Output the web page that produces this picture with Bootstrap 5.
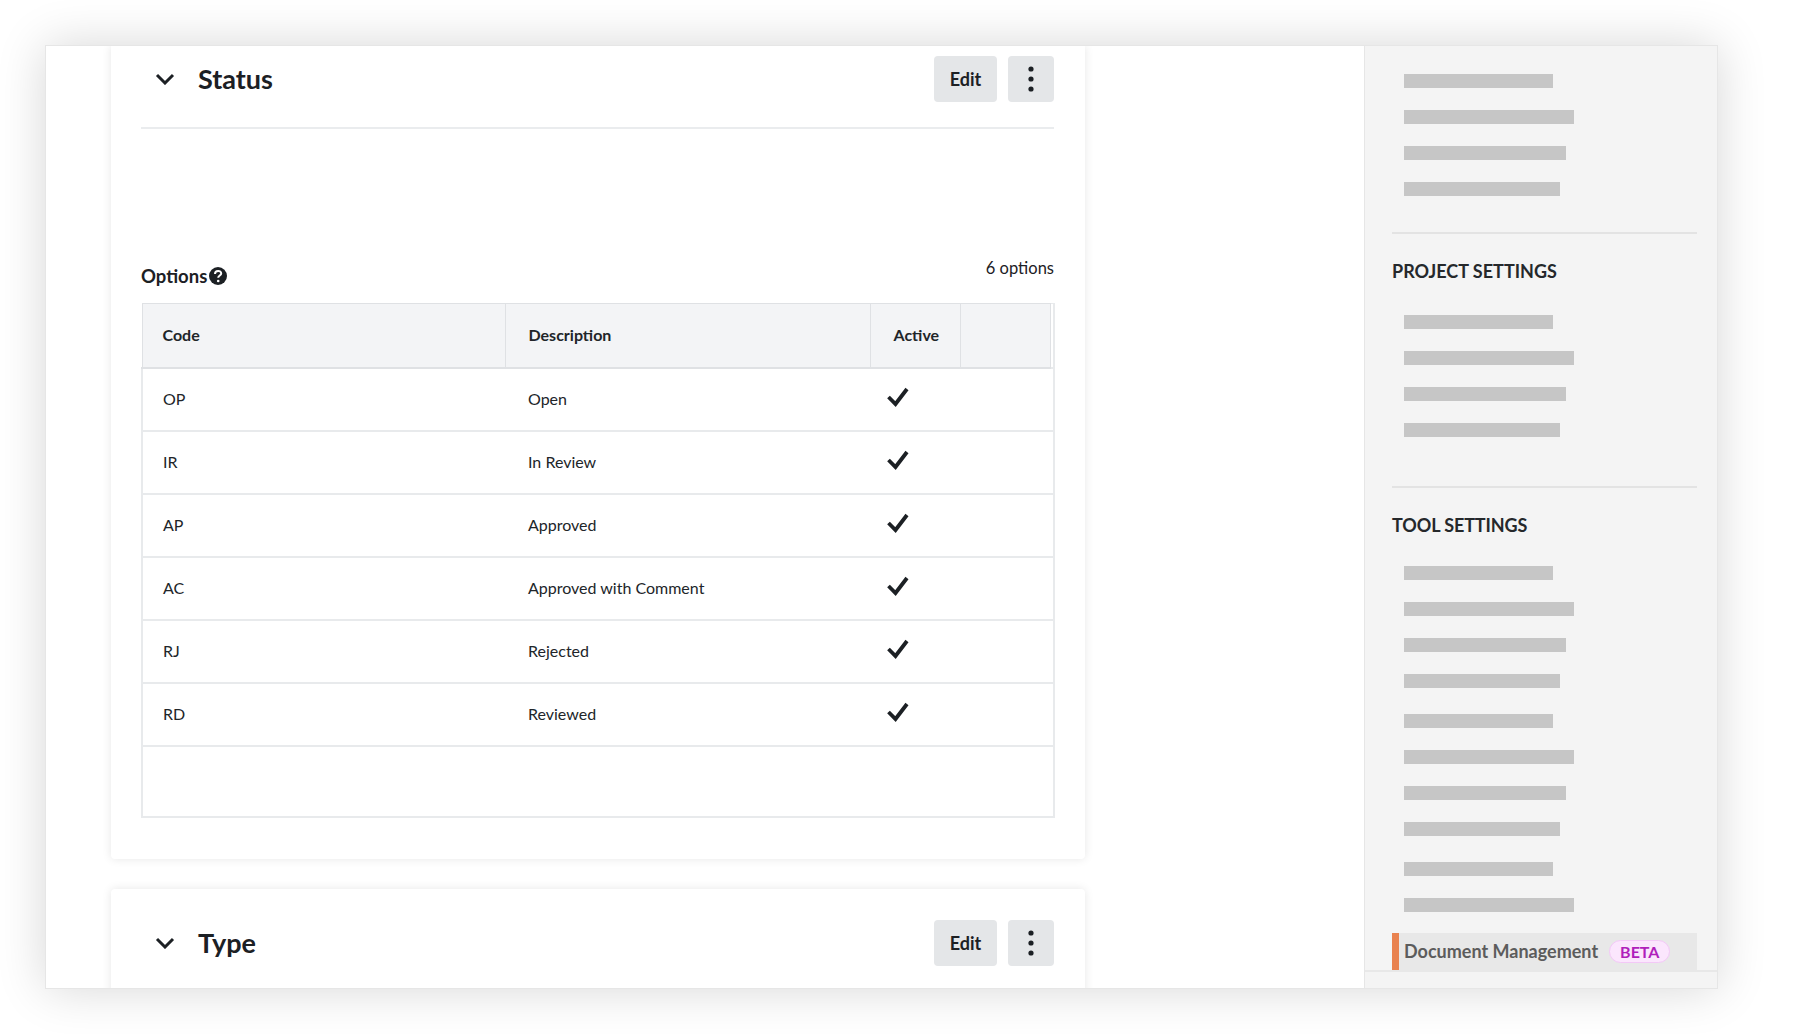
<!DOCTYPE html>
<html>
<head>
    <title>Configurable Fieldsets</title>
    <link href="https://cdn.jsdelivr.net/npm/bootstrap@5.3.0/dist/css/bootstrap.min.css" rel="stylesheet">
    <style>
        body { background: #fff; font-family: Lato, "Liberation Sans", sans-serif; color: #1c2024; height: 1034px; overflow: hidden; padding: 45px 82px 0 45px; }
        .app-window { width: 1673px; height: 944px; overflow: hidden; border: 1px solid #e6e6e6; box-shadow: 0 0 46px rgba(0,0,0,.16); background: #fff; }
        .main-pane { padding-left: 65px; }
        .field-card { width: 974px; padding: 0 31px 0 30px; background: #fff; box-shadow: 0 0 10px rgba(0,0,0,.1); border-radius: 0 0 4px 4px; }
        .field-card + .field-card { margin-top: 30px; border-radius: 4px 4px 0 0; padding-top: 31px; height: 110px; }
        .first-card { padding-top: 10px; height: 813px; }
        .card-head { height: 46px; }
        .first-card .card-head { padding-bottom: 25px; border-bottom: 2px solid #eaecee; box-sizing: content-box; }
        .head-title { font-size: 27px; font-weight: 700; margin: 0 0 0 23px; line-height: 46px; }
        .chevron { width: 20px; height: 12px; margin-left: 14px; }
        .grey-btn { background: #e4e6e8; border: 0; height: 46px; border-radius: 4px; color: #1c2024; font-size: 18px; font-weight: 700; padding: 0; }
        .edit-btn { width: 63px; margin-right: 11px; }
        .dots-btn { width: 46px; }
        .options-row { height: 174px; padding-bottom: 15px; }
        .options-label { font-size: 18.500px; font-weight: 700; line-height: 24px; }
        .options-count { font-size: 16.500px; line-height: 24px; margin-bottom: 8px; }
        .help-icon { width: 18px; height: 18px; margin-left: 2px; }
        .opts-table { table-layout: fixed; width: 912px; margin: 0; border-collapse: collapse; font-size: 16px; }
        .opts-table th { background: #f3f4f6; height: 64px; font-weight: 700; border: 1px solid #dfe1e4; border-width: 1px 1px 2px 1px; padding: 0 20px; vertical-align: middle; }
        .opts-table td { height: 63px; padding: 0 20px; vertical-align: middle; border: 0; border-bottom: 2px solid #e8eaec; box-shadow: none; }
        .opts-table th:nth-child(2), .opts-table th:nth-child(3), .opts-table td:nth-child(2), .opts-table td:nth-child(3) { padding-left: 23px; }
        .opts-table tr > td:first-child { border-left: 2px solid #e8eaec; }
        .opts-table tr > td:last-child { border-right: 2px solid #e8eaec; }
        .opts-table .spacer-cell { padding: 0; background: #fff; border-width: 1px 2px 2px 0; border-color: #e8eaec; }
        .opts-table .empty-row td { height: 71px; }
        .check-icon { width: 24px; height: 22px; margin-left: -8px; margin-top: -5px; display: block; }
        .side-pane { width: 353px; flex: none; background: #f4f4f4; border-left: 1px solid #e6e6e6; padding: 28px 20px 0 27px; }
        .side-bar-row { height: 14px; background: #c6c6c6; margin: 0 0 22px 12px; }
        .w-a { width: 149px; }
        .w-b { width: 170px; }
        .w-c { width: 162px; }
        .w-d { width: 156px; }
        .side-group { border-bottom: 2px solid #e3e3e3; padding-bottom: 14px; }
        .side-group + .side-group { padding-bottom: 27px; }
        .side-title { font-size: 18px; font-weight: 700; color: #25282b; margin: 0; line-height: 24px; padding: 25px 0 32px; }
        .tool-title { padding-bottom: 29px; letter-spacing: -.1px; }
        .bar-set-plain { margin-bottom: 26px; }
        .bar-set-last { margin-bottom: 21px; }
        .side-active { height: 37px; background: #e8e8e8; border-left: 7px solid #e9824f; padding-left: 5px; font-size: 18px; font-weight: 700; color: #5c5c5c; }
        .beta-pill { margin-left: 11px; border: 1px solid #f3c8f7; background: #fbe6fd; color: #b01fbb; font-size: 16px; font-weight: 700; border-radius: 12px; padding: 0 10px; line-height: 21px; }
        .side-foot { border-top: 2px solid #e8e8e8; margin: 0 -20px 0 -27px; }
    </style>
</head>
<body>
<div class="app-window d-flex">
    <div class="main-pane flex-grow-1">
        <div class="field-card first-card">
            <div class="card-head d-flex align-items-center">
                <svg class="chevron" viewBox="0 0 20 12"><path d="M2 2l8 8 8-8" fill="none" stroke="#1c2024" stroke-width="3"/></svg>
                <h2 class="head-title flex-grow-1">Status</h2>
                <button class="grey-btn edit-btn" type="button">Edit</button>
                <button class="grey-btn dots-btn d-flex align-items-center justify-content-center" type="button">
                    <svg width="6" height="26" viewBox="0 0 6 26"><circle cx="3" cy="3" r="2.600" fill="#1c2024"/><circle cx="3" cy="13" r="2.600" fill="#1c2024"/><circle cx="3" cy="23" r="2.600" fill="#1c2024"/></svg>
                </button>
            </div>
            <div class="options-row d-flex align-items-end justify-content-between">
                <div class="options-label d-flex align-items-center">Options
                    <svg class="help-icon" viewBox="0 0 18 18"><circle cx="9" cy="9" r="9" fill="#1c2024"/><path d="M6 7c0-4 6.200-4 6.200-.5 0 2-3 2-3 4.300" fill="none" stroke="#fff" stroke-width="2"/><circle cx="9.200" cy="14" r="1.300" fill="#fff"/></svg>
                </div>
                <div class="options-count">6 options</div>
            </div>
            <table class="table opts-table">
                <colgroup><col style="width:363px"><col style="width:365px"><col style="width:90px"><col style="width:90px"><col style="width:4px"></colgroup>
                <thead>
                <tr><th>Code</th><th>Description</th><th>Active</th><th></th><th class="spacer-cell"></th></tr>
                </thead>
                <tbody id="optionRows"></tbody>
            </table>
        </div>
        <div class="field-card">
            <div class="card-head d-flex align-items-center">
                <svg class="chevron" viewBox="0 0 20 12"><path d="M2 2l8 8 8-8" fill="none" stroke="#1c2024" stroke-width="3"/></svg>
                <h2 class="head-title flex-grow-1">Type</h2>
                <button class="grey-btn edit-btn" type="button">Edit</button>
                <button class="grey-btn dots-btn d-flex align-items-center justify-content-center" type="button">
                    <svg width="6" height="26" viewBox="0 0 6 26"><circle cx="3" cy="3" r="2.600" fill="#1c2024"/><circle cx="3" cy="13" r="2.600" fill="#1c2024"/><circle cx="3" cy="23" r="2.600" fill="#1c2024"/></svg>
                </button>
            </div>
        </div>
    </div>
    <div class="side-pane">
        <div class="side-group">
            <div class="side-bar-row w-a"></div><div class="side-bar-row w-b"></div><div class="side-bar-row w-c"></div><div class="side-bar-row w-d"></div>
        </div>
        <div class="side-group">
            <h6 class="side-title">PROJECT SETTINGS</h6>
            <div class="side-bar-row w-a"></div><div class="side-bar-row w-b"></div><div class="side-bar-row w-c"></div><div class="side-bar-row w-d"></div>
        </div>
        <h6 class="side-title tool-title">TOOL SETTINGS</h6>
        <div class="bar-set-plain">
            <div class="side-bar-row w-a"></div><div class="side-bar-row w-b"></div><div class="side-bar-row w-c"></div><div class="side-bar-row w-d mb-0"></div>
        </div>
        <div class="bar-set-plain">
            <div class="side-bar-row w-a"></div><div class="side-bar-row w-b"></div><div class="side-bar-row w-c"></div><div class="side-bar-row w-d mb-0"></div>
        </div>
        <div class="bar-set-last">
            <div class="side-bar-row w-a"></div><div class="side-bar-row w-b mb-0"></div>
        </div>
        <div class="side-active d-flex align-items-center">Document Management <span class="beta-pill">BETA</span></div>
        <div class="side-foot"></div>
    </div>
</div>

<script>
    const options = [
        ["OP", "Open"],
        ["IR", "In Review"],
        ["AP", "Approved"],
        ["AC", "Approved with Comment"],
        ["RJ", "Rejected"],
        ["RD", "Reviewed"]
    ];
    const check = '<svg class="check-icon" viewBox="0 0 24 22"><path d="M3.500 11l7 7L22 3" fill="none" stroke="#1c2024" stroke-width="3.800"/></svg>';
    document.getElementById("optionRows").innerHTML = options.map(o => `
        <tr><td>${o[0]}</td><td>${o[1]}</td><td>${check}</td><td></td><td class="p-0"></td></tr>
    `).join("") + '<tr class="empty-row"><td colspan="5"></td></tr>';
</script>
<script src="https://cdn.jsdelivr.net/npm/bootstrap@5.3.0/dist/js/bootstrap.bundle.min.js"></script>
</body>
</html>
